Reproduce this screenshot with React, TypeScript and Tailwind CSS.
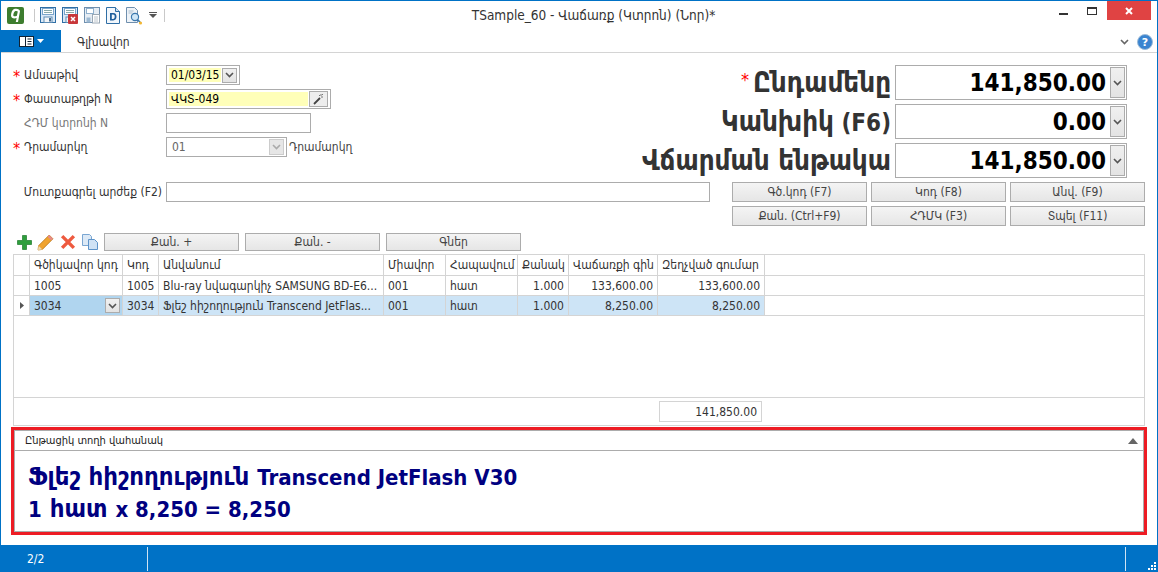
import type { ReactNode } from 'react';

const cols = 'grid-cols-[16px_93px_36px_225px_62px_72px_51px_89px_107px_1fr]';

const Star = () => <span className="text-[#f00] text-[16px] w-[10px] shrink-0 leading-none pt-[3px] -ml-px">*</span>;

const Chevron = ({ className = 'text-[#555]' }: { className?: string }) => (
  <svg width="9" height="6" viewBox="0 0 9 6" className={className}>
    <path d="M1 1l3.5 3.5L8 1" fill="none" stroke="currentColor" strokeWidth="1.6" />
  </svg>
);

const DropBtn = ({ className = 'w-[15px] h-[15px]' }: { className?: string }) => (
  <span className={`${className} border border-[#acacac] bg-gradient-to-b from-[#f0f0f0] to-[#e3e3e3] flex items-center justify-center shrink-0`}>
    <Chevron />
  </span>
);

const Floppy = ({ badge }: { badge?: boolean }) => (
  <svg width="16" height="17" viewBox="0 0 16 17">
    <rect x="0.5" y="0.5" width="15" height="15" fill="#dbe9f6" stroke="#2f6ea5" />
    <rect x="2.5" y="1.5" width="11" height="6" fill="#fff" stroke="#7ba6cc" />
    <path d="M4 3.5h8M4 5.5h8" stroke="#8aa" />
    <rect x="4" y="10" width="8" height="5.5" fill="#f4f6f8" stroke="#5f8db5" />
    <rect x="9" y="11" width="2" height="3.5" fill="#4a6f92" />
    {badge && (
      <g>
        <rect x="6" y="7" width="10" height="10" rx="1" fill="#c8373a" />
        <path d="M9 10l4 4M13 10l-4 4" stroke="#fff" strokeWidth="1.5" />
      </g>
    )}
  </svg>
);

const FloppyCopy = () => (
  <svg width="16" height="17" viewBox="0 0 16 17">
    <rect x="0.5" y="0.5" width="15" height="15" fill="#e6edf4" stroke="#6f8fae" />
    <rect x="2.5" y="1.5" width="7" height="5" fill="#fff" stroke="#8fb0cd" />
    <rect x="8.5" y="7.5" width="7" height="8.5" fill="#fff" stroke="#9aa8b5" />
    <path d="M10 10h4M10 12h4M10 14h4" stroke="#bbc4cc" />
    <rect x="2.5" y="10.5" width="4" height="5" fill="#9db9d2" />
  </svg>
);

const DocD = () => (
  <svg width="14" height="17" viewBox="0 0 14 17">
    <path d="M0.5 0.5h9l4 4v12h-13z" fill="#f2f7fc" stroke="#2f6ea5" />
    <path d="M9.5 0.5v4h4" fill="#cfe0f0" stroke="#2f6ea5" />
    <path d="M4 6h3.2c2.4 0 3.3 1.6 3.3 3.6S9.6 13.5 7.2 13.5H4z M5.8 7.6v4.3h1.2c1.3 0 1.7-1 1.7-2.2S8.3 7.6 7 7.6z" fill="#1f5f9c" fillRule="evenodd" />
  </svg>
);

const Preview = () => (
  <svg width="17" height="18" viewBox="0 0 17 18">
    <path d="M0.5 0.5h8l3 3v12h-11z" fill="#eef3f8" stroke="#6f8fae" />
    <path d="M2.5 4h5M2.5 6h4" stroke="#a9bccd" />
    <circle cx="9" cy="10" r="3.6" fill="#cfe6f7" stroke="#3b78ad" strokeWidth="1.2" />
    <path d="M11.5 12.6l2.6 2.6" stroke="#3b78ad" strokeWidth="1.6" />
    <circle cx="14.5" cy="16" r="1.6" fill="#f2b632" />
  </svg>
);

const Sep = () => <span className="block w-px h-[13px] bg-[#c9c9c9]" />;

const Field = ({ className, children }: { className: string; children?: ReactNode }) => (
  <div className={`${className} h-[20px] border border-[#acacac] bg-white flex items-center px-[2px] gap-[1px]`}>
    {children}
  </div>
);

const FormRow = ({ label, required, muted, children }: { label: string; required?: boolean; muted?: boolean; children: ReactNode }) => (
  <div className="flex items-center h-[20px]">
    <div className="w-[13px] shrink-0" />
    <div className="w-[10px] shrink-0 flex">{required && <Star />}</div>
    <div className={`w-[142px] shrink-0 ${muted ? 'text-[#777]' : 'text-[#333]'}`}>{label}</div>
    {children}
  </div>
);

const Total = ({ label, hotkey, value, required }: { label: string; hotkey?: string; value: string; required?: boolean }) => (
  <div className="flex items-center justify-end h-[35px]">
    {required && <span className="text-[#f00] text-[18px] leading-none mr-[4px] mb-[6px]">*</span>}
    <span className="font-bold text-[#333] text-[27.5px] mr-[4px] whitespace-nowrap">
      {label}
      {hotkey && <span className="text-[24px]"> {hotkey}</span>}
    </span>
    <div className="w-[232px] h-[35px] border border-[#acacac] flex items-center justify-end pr-[1px] gap-[4px]">
      <span className="font-bold text-black text-[24px]">{value}</span>
      <DropBtn className="w-[15px] h-[31px]" />
    </div>
  </div>
);

const Btn = ({ children }: { children: ReactNode }) => (
  <div className="w-[135px] h-[20px] border border-[#acacac] bg-gradient-to-b from-[#f4f4f4] to-[#e6e6e6] flex items-center justify-center text-[#444]">
    {children}
  </div>
);

const QtyBtn = ({ children }: { children: ReactNode }) => (
  <div className="w-[135px] h-[18px] border border-[#acacac] bg-gradient-to-b from-[#f4f4f4] to-[#e6e6e6] flex items-center justify-center text-[#444]">
    {children}
  </div>
);

const Cell = ({ children, right, className = '' }: { children?: ReactNode; right?: boolean; className?: string }) => (
  <div className={`border-r border-b border-[#d4d4d4] px-[4px] flex items-center whitespace-nowrap overflow-hidden text-[#333] ${right ? 'justify-end' : ''} ${className}`}>
    {children}
  </div>
);

const heads = ['Գծիկավոր կոդ', 'Կոդ', 'Անվանում', 'Միավոր', 'Հապավում', 'Քանակ', 'Վաճառքի գին', 'Զեղչված գումար'];

export default function App() {
  return (
    <div className="w-[1158px] h-[572px] bg-white flex flex-col overflow-hidden text-[12px] leading-none border-t border-x border-[#0072c6] [font-family:'DejaVu_Sans_Condensed','DejaVu_Sans',sans-serif]">
      {/* title bar */}
      <div className="h-[29px] flex items-center shrink-0 relative">
        <div className="ml-[6px] w-[17px] h-[17px] rounded-[2px] bg-[#3d7d2f] flex items-center justify-center">
          <svg width="13" height="15" viewBox="0 0 13 15">
            <path d="M5 1c2.500-.8 6-.3 6 2.300L9 14H6.800l.8-4C5 11 2 10.300 2 7.500 2 5 3.200 1.800 5 1zm1 2.200C5 3.800 4.300 5.800 4.300 7.300c0 1.200 1.500 1.300 3.600.5l.9-4.300C8.400 2.900 6.800 2.800 6 3.200z" fill="#fff" fillRule="evenodd" />
          </svg>
        </div>
        <span className="ml-[10px] mr-[5px]"><Sep /></span>
        <div className="flex items-center gap-[6px]">
          <Floppy />
          <Floppy badge />
          <FloppyCopy />
          <DocD />
          <Preview />
        </div>
        <svg width="8" height="7" viewBox="0 0 8 7" className="ml-[6px]">
          <path d="M0 0h8v1H0zM0 2h8L4 6z" fill="#555" />
        </svg>
        <span className="ml-[7px]"><Sep /></span>
        <div className="flex-1 text-center text-[#333] text-[13.5px] pl-[12px] mr-[147px] whitespace-nowrap">TSample_60 - Վաճառք (Կտրոն) (Նոր)*</div>
        {/* window buttons */}
        <div className="absolute right-[6px] top-0 flex items-start">
          <span className="w-[9px] h-[2px] bg-[#333] mt-[12px] mr-[19px]" />
          <span className="w-[10px] h-[8px] border border-[#333] border-t-[2px] mt-[6px] mr-[10px]" />
          <span className="w-[44px] h-[19px] bg-[#e04343] flex items-center justify-center">
            <svg width="8" height="8" viewBox="0 0 8 8"><path d="M1 1l6 6M7 1L1 7" stroke="#fff" strokeWidth="2" /></svg>
          </span>
        </div>
      </div>

      {/* ribbon tabs */}
      <div className="h-[23px] flex items-stretch border-b border-[#d4d4d4] shrink-0 relative">
        <div className="w-[60px] bg-[#0072c6] flex items-center justify-center gap-[3px]">
          <svg width="15" height="11" viewBox="0 0 15 11">
            <rect x="0.5" y="0.5" width="14" height="10" fill="#fff" stroke="#123" />
            <path d="M6.500 1v9" stroke="#123" />
            <path d="M8.500 3h4M8.500 5.500h4M8.500 8h4" stroke="#123" />
          </svg>
          <svg width="7" height="4" viewBox="0 0 7 4"><path d="M0 0h7L3.500 4z" fill="#fff" /></svg>
        </div>
        <div className="ml-[16px] mt-[2px] flex items-center text-[#333]">Գլխավոր</div>
        <div className="flex-1" />
        <div className="flex items-center gap-[8px] pr-[4px] mt-[2px]">
          <Chevron className="text-[#666]" />
          <svg width="16" height="16" viewBox="0 0 16 16">
            <circle cx="8" cy="8" r="7.500" fill="#3a84d0" stroke="#9cbbd8" />
            <text x="8" y="12" textAnchor="middle" fontSize="11" fontWeight="700" fill="#fff" fontFamily="DejaVu Sans">?</text>
          </svg>
        </div>
      </div>

      {/* head form */}
      <div className="flex justify-between pt-[12px] pr-[30px] shrink-0">
        <div className="flex flex-col gap-[4px]">
          <FormRow label="Ամսաթիվ" required>
            <Field className="w-[74px]">
              <span className="bg-[#ffffb9] flex-1 h-[14px] flex items-center text-black pl-[2px]">01/03/15</span>
              <DropBtn />
            </Field>
          </FormRow>
          <FormRow label="Փաստաթղթի N" required>
            <Field className="w-[165px]">
              <span className="bg-[#ffffb9] flex-1 h-[14px] flex items-center text-black pl-[2px]">ՎԿՏ-049</span>
              <span className="w-[19px] h-[16px] border border-[#acacac] bg-[#eee] flex items-center justify-center">
                <svg width="11" height="11" viewBox="0 0 11 11">
                  <path d="M1 10l6-6" stroke="#444" strokeWidth="1.800" />
                  <path d="M8 0v2M10 3H8M6 1l1 1M10 0l-1 1" stroke="#777" />
                </svg>
              </span>
            </Field>
          </FormRow>
          <FormRow label="ՀԴՄ կտրոնի N" muted>
            <Field className="w-[145px]" />
          </FormRow>
          <FormRow label="Դրամարկղ" required>
            <Field className="w-[121px]">
              <span className="flex-1 pl-[3px] text-[#666]">01</span>
              <span className="w-[15px] h-[16px] border border-[#ccc] bg-[#e6e6e6] flex items-center justify-center">
                <Chevron className="text-[#aaa]" />
              </span>
            </Field>
            <span className="ml-[2px] text-[#444]">Դրամարկղ</span>
          </FormRow>
        </div>
        <div className="flex flex-col gap-[4px]">
          <Total label="Ընդամենը" value="141,850.00" required />
          <Total label="Կանխիկ" hotkey="(F6)" value="0.00" />
          <Total label="Վճարման ենթակա" value="141,850.00" />
        </div>
      </div>

      {/* search + shortcut buttons */}
      <div className="flex pt-[4px] shrink-0">
        <div className="w-[165px] shrink-0 flex justify-end items-start h-[20px] pt-[4px] pr-[4px] text-[#333] whitespace-nowrap">Մուտքագրել արժեք (F2)</div>
        <div className="w-[544px] h-[20px] border border-[#acacac] shrink-0" />
        <div className="ml-[22px] grid grid-cols-[135px_135px_135px] gap-x-[4px] gap-y-[4px]">
          <Btn>Գծ.կոդ (F7)</Btn>
          <Btn>Կոդ (F8)</Btn>
          <Btn>Անվ. (F9)</Btn>
          <Btn>Քան. (Ctrl+F9)</Btn>
          <Btn>ՀԴՄԿ (F3)</Btn>
          <Btn>Տպել (F11)</Btn>
        </div>
      </div>

      {/* grid toolbar */}
      <div className="flex items-center h-[18px] mt-[7px] pl-[16px] shrink-0">
        <div className="flex items-center w-[87px]">
          <svg width="15" height="15" viewBox="0 0 15 15">
            <path d="M5.500 0.500h4v5h5v4h-5v5h-4v-5h-5v-4h5z" fill="#2e9e3c" stroke="#1f7a2c" strokeWidth="0.700" />
          </svg>
          <svg width="17" height="17" viewBox="0 0 16 16" className="ml-[5px]">
            <path d="M11.500 1l3.500 3.500L5 14.500 1 15l.5-4z" fill="#f0a32e" stroke="#b97716" strokeWidth="0.800" />
            <path d="M11.500 1l3.500 3.500-1.500 1.500L10 2.500z" fill="#e68a8a" />
            <path d="M1 15l.5-4 3.500 3.500z" fill="#eed9b0" />
          </svg>
          <svg width="16" height="16" viewBox="0 0 15 15" className="ml-[6px]">
            <path d="M2 2l11 11M13 2L2 13" stroke="#ee5a3f" strokeWidth="3.200" />
          </svg>
          <svg width="16" height="16" viewBox="0 0 16 16" className="ml-[6px]">
            <path d="M0.500 0.500h7l2 2v9h-9z" fill="#dce9f6" stroke="#7aa6d2" />
            <path d="M6.500 5.500h6l3 3v7h-9z" fill="#cfe2f5" stroke="#5d93c9" />
          </svg>
        </div>
        <div className="flex gap-[6px]">
          <QtyBtn>Քան. +</QtyBtn>
          <QtyBtn>Քան. -</QtyBtn>
          <QtyBtn>Գներ</QtyBtn>
        </div>
      </div>

      {/* lines grid */}
      <div className="mx-[12px] mt-[3px] h-[172px] shrink-0 border border-[#d4d4d4] flex flex-col">
        <div className={`grid ${cols} h-[21px] shrink-0`}>
          <Cell />
          {heads.map((h) => (
            <Cell key={h}>{h}</Cell>
          ))}
          <div className="border-b border-[#d4d4d4]" />
        </div>
        <div className={`grid ${cols} h-[20px] shrink-0`}>
          <Cell />
          <Cell>1005</Cell>
          <Cell>1005</Cell>
          <Cell>Blu-ray նվագարկիչ SAMSUNG BD-E6...</Cell>
          <Cell>001</Cell>
          <Cell>հատ</Cell>
          <Cell right>1.000</Cell>
          <Cell right>133,600.00</Cell>
          <Cell right>133,600.00</Cell>
          <div className="border-b border-[#d4d4d4]" />
        </div>
        <div className={`grid ${cols} h-[20px] shrink-0`}>
          <Cell className="justify-center !px-0">
            <svg width="4" height="7" viewBox="0 0 4 7"><path d="M0 0l4 3.500L0 7z" fill="#555" /></svg>
          </Cell>
          <Cell className="bg-[#b0d5ef] justify-between !pr-[2px]">
            3034
            <DropBtn className="w-[15px] h-[15px]" />
          </Cell>
          <Cell className="bg-[#cde4f6]">3034</Cell>
          <Cell className="bg-[#cde4f6]">Ֆլեշ հիշողություն Transcend JetFlas...</Cell>
          <Cell className="bg-[#cde4f6]">001</Cell>
          <Cell className="bg-[#cde4f6]">հատ</Cell>
          <Cell right className="bg-[#cde4f6]">1.000</Cell>
          <Cell right className="bg-[#cde4f6]">8,250.00</Cell>
          <Cell right className="bg-[#cde4f6]">8,250.00</Cell>
          <div className="border-b border-[#d4d4d4]" />
        </div>
        <div className="flex-1" />
        <div className="h-[28px] border-t border-[#d4d4d4] flex items-center shrink-0 pl-[645px]">
          <div className="w-[103px] h-[21px] border border-[#d4d4d4] flex items-center justify-end pr-[4px] text-[#333]">141,850.00</div>
        </div>
      </div>

      {/* selected row panel */}
      <div className="mx-[10px] mt-[1px] h-[108px] shrink-0 border-[3px] border-[#ed1c24] flex flex-col">
        <div className="flex-1 border border-[#acacac] flex flex-col">
          <div className="h-[20px] shrink-0 border-b border-[#acacac] flex items-center justify-between pl-[10px] pr-[5px] text-[#222] text-[11px]">
            <span>Ընթացիկ տողի վահանակ</span>
            <svg width="10" height="6" viewBox="0 0 10 6"><path d="M0 6l5-6 5 6z" fill="#666" /></svg>
          </div>
          <div className="flex flex-col pl-[13px] pt-[14px] gap-[8px] font-bold text-[#000080] text-[25.5px] leading-[22px]">
            <span className="whitespace-nowrap">Ֆլեշ հիշողություն <span className="text-[22px]">Transcend JetFlash V30</span></span>
            <span className="whitespace-nowrap"><span className="text-[22px]">1</span> հատ <span className="text-[22px]">x 8,250 = 8,250</span></span>
          </div>
        </div>
      </div>

      <div className="flex-1" />

      {/* status bar */}
      <div className="h-[27px] -mx-px bg-[#0072c6] flex items-center text-white shrink-0 relative">
        <span className="w-[148px] pl-[27px] h-[24px] mt-px flex items-center border-r border-[#cfe3f3]">2/2</span>
        <span className="flex-1" />
        <span className="w-px h-[24px] mt-px bg-[#cfe3f3] mr-[32px]" />
        <svg width="9" height="9" viewBox="0 0 9 9" className="absolute right-[2px] bottom-[2px]">
          <path d="M7 1h2v2H7zM4 4h2v2H4zM7 4h2v2H7zM1 7h2v2H1zM4 7h2v2H4zM7 7h2v2H7z" fill="#fff" />
        </svg>
      </div>
    </div>
  );
}
